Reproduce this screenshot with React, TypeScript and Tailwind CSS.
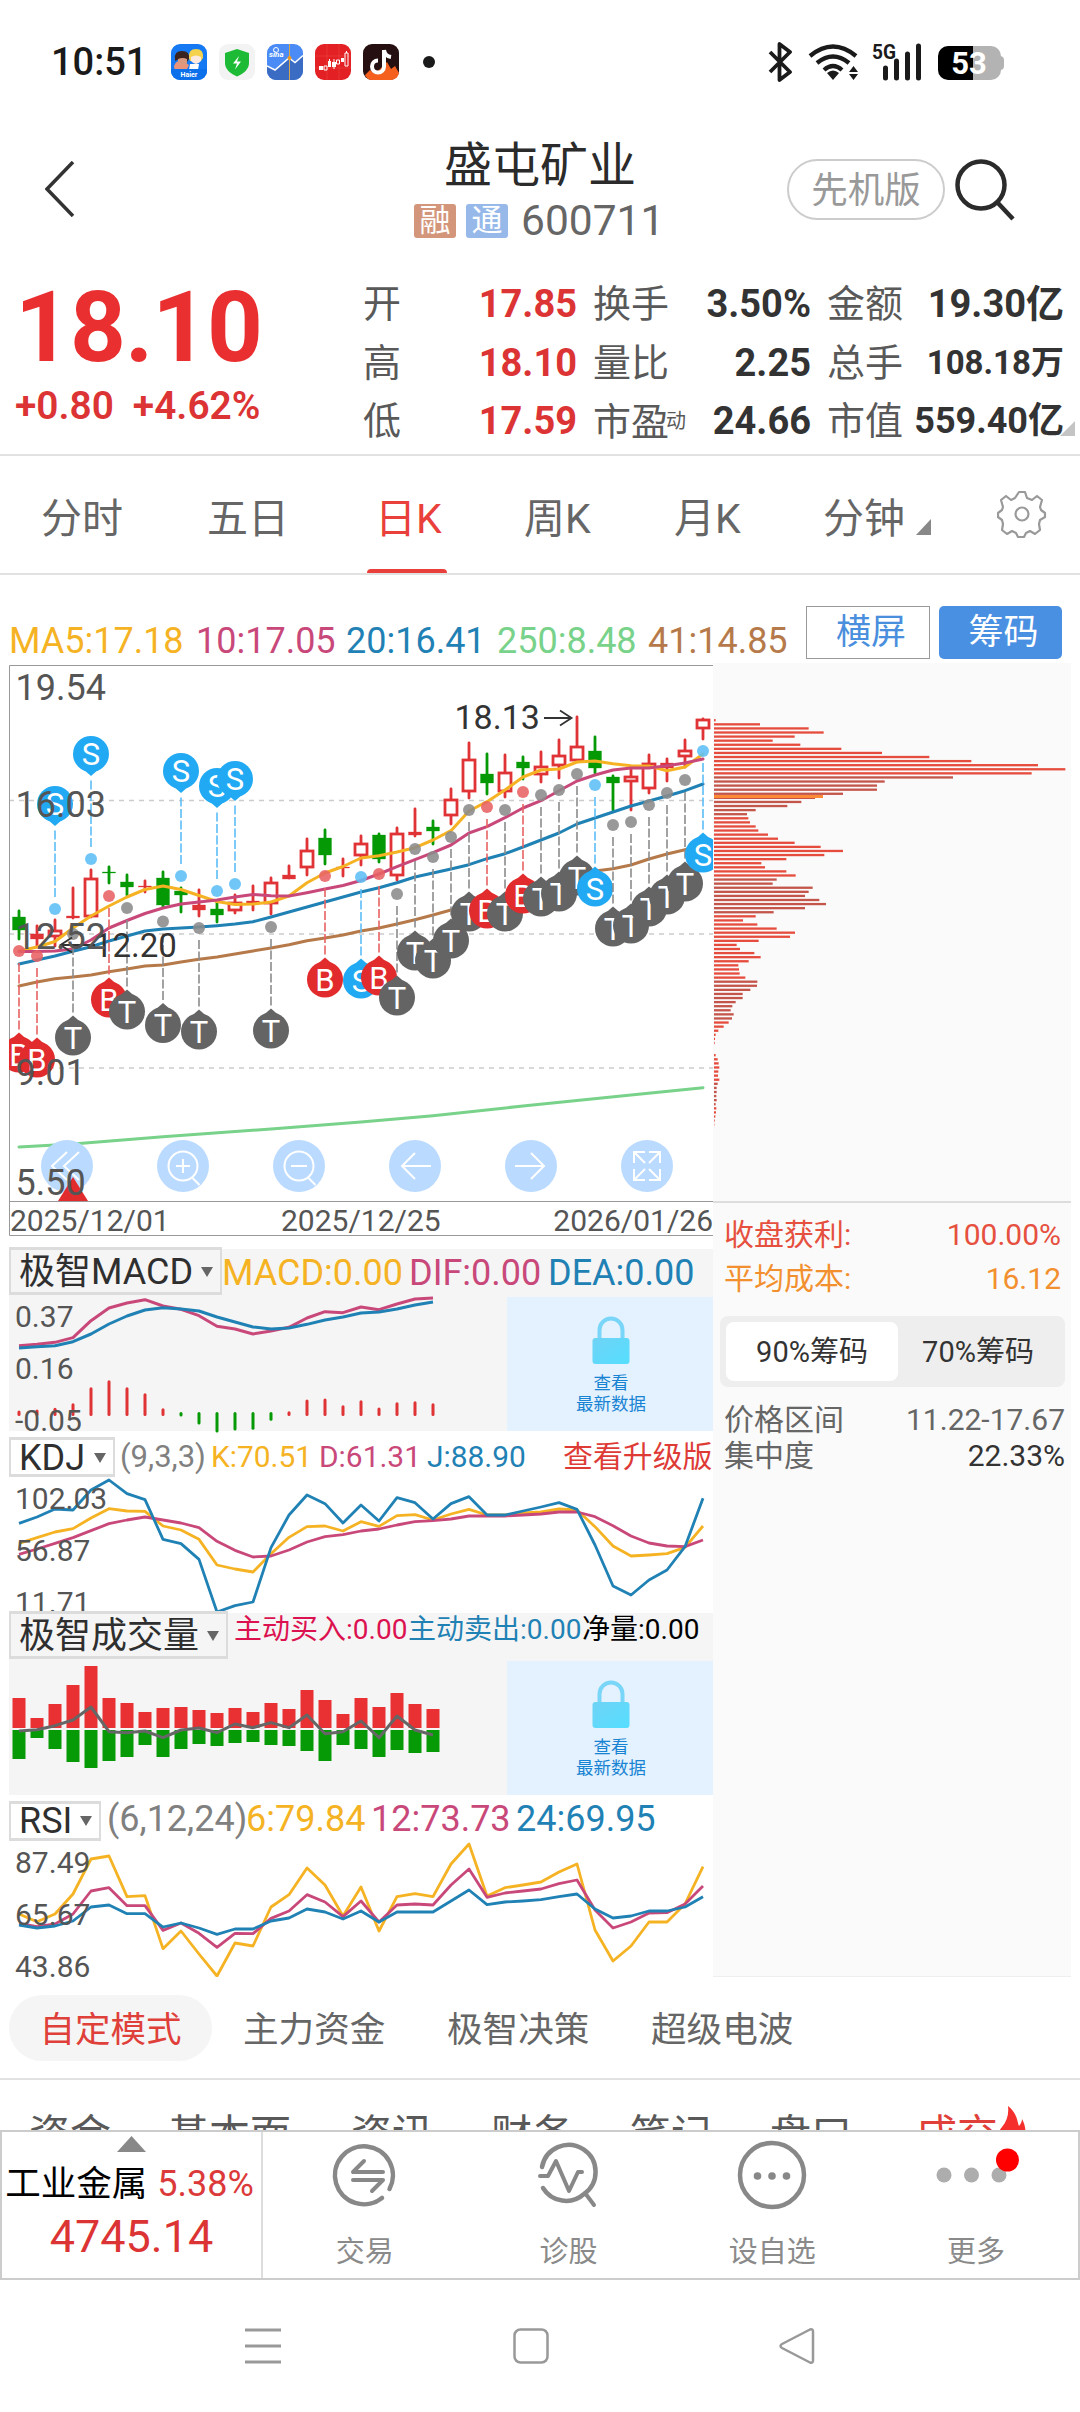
import React from 'react';

const STEP = 18;
const X0 = 19;
const cx = (i: number) => X0 + STEP * i;
const toPoints = (ys: number[]) => ys.map((y, i) => `${cx(i)},${y}`).join(' ');
// the sub charts are sampled at three units per pixel below their own origin
const scaled = (ys: number[], origin: number) => toPoints(ys.map(v => origin + v / 3));

const YELLOW = '#f5b324';
const PINK = '#c9487a';
const BLUE = '#1f81b4';
const UP = '#e03336';
const DOWN = '#069906';

// [kind, high, low, bodyTop, bodyBottom] - g: falling, r: rising (hollow), f: rising (filled), x/y: doji
type Candle = [string, number, number, number, number];
const candles: Candle[] = [
    ['g', 911, 939, 917, 930], ['f', 926, 947, 934, 939], ['r', 920, 946, 931, 936], ['x', 888, 918, 916, 918],
    ['r', 870, 917, 879, 916], ['y', 867, 883, 872, 873], ['g', 875, 895, 882, 887], ['x', 881, 892, 886, 887],
    ['g', 872, 907, 878, 905], ['g', 888, 912, 891, 895], ['f', 890, 916, 905, 910], ['g', 902, 922, 909, 915],
    ['r', 895, 913, 903, 910], ['f', 886, 910, 901, 903], ['r', 878, 914, 883, 903], ['f', 866, 878, 875, 879],
    ['r', 839, 875, 851, 867], ['g', 830, 864, 838, 855], ['x', 859, 876, 867, 868], ['r', 836, 865, 844, 855],
    ['g', 834, 862, 835, 859], ['r', 828, 880, 834, 875], ['f', 809, 836, 832, 835], ['g', 821, 844, 827, 831],
    ['r', 789, 824, 800, 815], ['r', 743, 798, 760, 791], ['g', 754, 794, 774, 783], ['r', 755, 797, 773, 791],
    ['g', 757, 779, 762, 768], ['r', 752, 782, 767, 774], ['r', 740, 778, 756, 765], ['r', 717, 761, 747, 760],
    ['g', 737, 773, 751, 768], ['g', 776, 810, 777, 783], ['r', 768, 810, 777, 781], ['r', 755, 793, 764, 788],
    ['f', 759, 781, 763, 768], ['r', 740, 767, 751, 756], ['r', 719, 739, 720, 728],
];

// [candle index, letter, dot y]
type Signal = [number, string, number];
const signalsAbove: Signal[] = [[2, 'S', 909], [4, 'S', 859], [9, 'S', 876], [11, 'S', 891], [12, 'S', 884]];
const signalsBelow: Signal[] = [
    [0, 'B', 951], [1, 'B', 956], [3, 'T', 934], [5, 'B', 896], [6, 'T', 908], [8, 'T', 921.5], [10, 'T', 928],
    [14, 'T', 927], [17, 'B', 876], [19, 'S', 877], [20, 'B', 874], [21, 'T', 894], [22, 'T', 849], [23, 'T', 857],
    [24, 'T', 837], [25, 'T', 810], [26, 'B', 807], [27, 'T', 810], [28, 'B', 792], [29, 'T', 795], [30, 'T', 790],
    [31, 'T', 774], [32, 'S', 785], [33, 'T', 825], [34, 'T', 822], [35, 'T', 805], [36, 'T', 793], [37, 'T', 780],
    [38, 'S', 751],
];
const pinColor: Record<string, string> = { S: '#22a9f3', B: '#e12b2d', T: '#646464' };
const dotColor: Record<string, string> = { S: '#5cbef6', B: '#e86263', T: '#8b8b8b' };

const ma5 = [951, 947, 941.5, 928, 916, 906, 897, 889.5, 886, 889.5, 895.5, 901.5, 904.5, 904, 902, 896, 882.7, 873, 866.5, 858, 855.7, 852, 847.7, 840, 830.7, 811, 801.7, 790, 777, 770, 769, 762, 761, 763.7, 765.7, 766, 770.7, 767, 754];
const ma10 = [951.5, 951.5, 951, 949, 940, 928, 920.5, 913.5, 908, 904, 902, 900, 897, 894.5, 895.7, 896, 892.7, 889, 885.5, 880.5, 874, 866.7, 859.7, 852.7, 845, 833, 826.7, 817.7, 808, 800.7, 790.7, 781, 775, 770, 768, 768, 765.7, 763, 759];
const ma20 = [964, 960, 956, 951.3, 946.7, 941, 936, 931, 929, 928, 927, 925.7, 924, 921.7, 917, 912, 907, 902, 897, 892, 887.7, 882.7, 877, 873, 869, 864.7, 858.7, 853.7, 847, 840, 833, 824, 818, 812, 806, 801, 796, 790.7, 784];
const ma41 = [986, 982, 978.7, 977, 975, 971.7, 969, 966, 965, 962, 959.3, 957, 954, 951, 948, 944.7, 940.7, 938, 935, 931, 928, 924, 919.7, 915, 910, 906, 902, 897, 891, 886, 881, 876, 871, 868.7, 865, 859, 854, 849.7, 845];

const difLine = [347, 343, 337, 323, 272, 234, 219, 209, 228, 238, 257, 289, 297, 312, 303, 292, 264, 245, 248, 231, 239, 222, 207, 204];
const deaLine = [354, 350, 347, 335, 312, 282, 258, 240, 233, 237, 243, 261, 276, 291, 297, 294, 283, 270, 261, 249, 246, 237, 225, 216];
const macdBars = [543, 540, 535, 521, 473, 452, 473, 491, 536, -558, -582, -606, -600, -598, -571, 545, 510, 507, 527, 512, 534, 518, 515, 521];

const jLine = [880, 861, 837, 840, 780, 750, 791, 809, 928, 941, 988, 1146, 1127, 1116, 953, 855, 795, 821, 879, 825, 873, 803, 818, 867, 821, 800, 855, 855, 843, 831, 818, 838, 945, 1068, 1095, 1050, 1020, 950, 805];
const kLine = [940, 923, 906, 896, 864, 836, 843, 844, 888, 900, 928, 1005, 1017, 1026, 971, 922, 890, 888, 903, 875, 889, 857, 854, 870, 852, 838, 855, 855, 849, 846, 837, 840, 890, 948, 978, 975, 971, 952, 888];
const dLine = [973, 957, 940, 923, 902, 881, 870, 861, 870, 879, 893, 934, 961, 981, 978, 960, 936, 920, 914, 903, 897, 885, 875, 872, 867, 858, 858, 858, 855, 852, 846, 846, 860, 887, 918, 939, 948, 950, 930];

const buyBars = [294, 354, 312, 255, 198, 294, 309, 336, 324, 321, 330, 339, 324, 336, 309, 327, 270, 300, 342, 294, 321, 279, 312, 327];
const sellBars = [477, 414, 447, 486, 504, 483, 471, 435, 471, 447, 432, 438, 429, 426, 435, 438, 453, 483, 435, 447, 471, 450, 459, 456];
const netLine = [393, 389, 377, 360, 321, 395, 398, 393, 413, 390, 384, 398, 372, 383, 368, 383, 345, 401, 395, 363, 413, 348, 390, 405];

const rsi6 = [942, 965, 942, 882, 777, 768, 890, 887, 1046, 993, 1062, 1128, 1029, 1038, 921, 884, 804, 855, 948, 861, 993, 890, 881, 890, 792, 732, 888, 863, 855, 846, 816, 792, 990, 1083, 1038, 966, 966, 912, 800];
const rsi12 = [970, 980, 972, 942, 873, 863, 917, 917, 991, 969, 1000, 1042, 1000, 1001, 955, 933, 884, 906, 950, 903, 966, 915, 912, 915, 855, 807, 892, 879, 873, 867, 851, 840, 930, 984, 966, 939, 938, 912, 858];
const rsi24 = [975, 984, 978, 963, 921, 915, 941, 941, 981, 969, 984, 1003, 987, 987, 963, 954, 927, 936, 957, 933, 966, 936, 936, 936, 903, 870, 914, 906, 903, 899, 890, 882, 927, 954, 948, 933, 933, 921, 890];

const chips = [5, 138, 284, 329, 242, 176, 259, 382, 504, 646, 772, 972, 1054, 953, 717, 512, 489, 489, 387, 303, 262, 220, 125, 99, 103, 108, 125, 133, 162, 192, 242, 320, 387, 331, 217, 142, 153, 217, 245, 188, 176, 296, 284, 273, 316, 336, 273, 179, 125, 87, 130, 188, 243, 228, 134, 68, 78, 121, 140, 104, 73, 75, 77, 94, 130, 129, 109, 86, 86, 65, 55, 50, 59, 54, 44, 29, 13, 5, 3, 2, 0, 0, 5, 11, 14, 16, 13, 12, 16, 11, 8, 8, 7, 8, 5, 7, 6, 4, 2, 1];
const isDarkChip = (k: number) => (k >= 14 && k <= 23) || (k >= 39 && k <= 47) || (k >= 64 && k <= 73) || (k >= 89 && k <= 94);

const quotes = [
    { w: 'w-[214px]', rows: [['开', '17.85', 'text-[38px] text-[#dc3434]'], ['高', '18.10', 'text-[38px] text-[#dc3434]'], ['低', '17.59', 'text-[38px] text-[#dc3434]']] },
    { w: 'w-[218px]', rows: [['换手', '3.50%', 'text-[38px] text-[#333]'], ['量比', '2.25', 'text-[38px] text-[#333]'], ['市盈', '24.66', 'text-[38px] text-[#333]']] },
    { w: 'w-[237px]', rows: [['金额', '19.30亿', 'text-[38px] text-[#333]'], ['总手', '108.18万', 'text-[33px] text-[#333]'], ['市值', '559.40亿', 'text-[36px] text-[#333]']] },
];

const periods = [
    { label: '分时', w: 'w-[166px]' }, { label: '五日', w: 'w-[168px]' }, { label: '日K', w: 'w-[149px]', active: true },
    { label: '周K', w: 'w-[150px]' }, { label: '月K', w: 'w-[149px]' }, { label: '分钟', w: 'w-[93px]' },
];

const StatusBar = () => (
    <div className="flex h-[124px] items-center pl-[51px]">
        <span className="w-[120px] text-[38px] leading-none font-medium text-[#1a1a1a]">10:51</span>
        <div className="flex gap-3">
            <svg className="size-9" viewBox="0 0 36 36">
                <rect width="36" height="36" rx="9" fill="#1479f2" />
                <path d="M3 22q2-6 9-5l6 4-3 6H4z" fill="#e9937a" />
                <path d="M4 15q-1-8 7-8 8 0 7 8l-2 3q-6-5-12-1z" fill="#3b2320" />
                <path d="M7 15q5-2 9 0v4q-4 5-9 0z" fill="#d99a80" />
                <path d="M18 14q-1-9 7-9 8 0 7 9l-2 3H19z" fill="#f5d24c" />
                <path d="M20 13q5-3 10 0v4q-5 6-10 0z" fill="#fbe9e0" />
                <path d="M19 20h9l-1 6h-9z" fill="#fff" />
                <path d="M0 25h36v2a9 9 0 0 1-9 9H9a9 9 0 0 1-9-9z" fill="#0b70ea" />
                <text x="18" y="33" textAnchor="middle" fontSize="7" fontWeight="700" fill="#fff">Haier</text>
            </svg>
            <svg className="size-9" viewBox="0 0 36 36">
                <rect width="36" height="36" rx="9" fill="#f3f3f3" />
                <path d="M18 5l12 4v10c0 6-5 10.500-12 13.500C11 29.500 6 25 6 19V9z" fill="#1dbb35" />
                <path d="M20 12l-6 7.500h4l-2 6 6-8h-4z" fill="#fff" />
            </svg>
            <svg className="size-9" viewBox="0 0 36 36">
                <rect width="36" height="36" rx="9" fill="#4b8bf5" />
                <path d="M0 22l8 4 14-12 5 4 9-7v16a9 9 0 0 1-9 9H9a9 9 0 0 1-9-9z" fill="#3a6cc4" />
                <path d="M0 22l8 4 14-12 6 4.500 8-7" fill="none" stroke="#fff" strokeWidth="1.500" />
                <path d="M22.500 0v36" stroke="#d5a64b" />
                <circle cx="22.500" cy="14" r="2" fill="#f39a1e" />
                <circle cx="9" cy="6" r="2.500" fill="none" stroke="#fff" />
                <text x="2" y="13" fontSize="8" fontStyle="italic" fontWeight="700" fill="#fff">sina</text>
            </svg>
            <svg className="size-9" viewBox="0 0 36 36">
                <rect width="36" height="36" rx="9" fill="#e32124" />
                <path d="M12 0v36M24 0v36M0 12h36M0 24h36" stroke="#e83c3e" strokeWidth="0.700" />
                <path d="M4 22h4v4H4zM13 17h3v6h-3zM17 18h4v5h-4zM26 14h3v4h-3z" fill="#fff" />
                <path d="M9 22h3v4H9zM21.500 16h3v4h-3zM30 9h3v13h-3zM14.500 15v2M19 15v10M31.500 7v2" fill="none" stroke="#fff" />
            </svg>
            <svg className="size-9" viewBox="0 0 36 36">
                <rect width="36" height="36" rx="9" fill="#260f10" />
                <path d="M2 31l5-5 5 4 12-12 4 7 4-3 4 7a9 9 0 0 1-8 7H9q-5 0-7-5z" fill="#f5601f" />
                <path d="M21 6v16.500a6 6 0 1 1-6-6" fill="none" stroke="#fff" strokeWidth="4" />
                <path d="M21 6q1 6 7 7" fill="none" stroke="#fff" strokeWidth="4" />
            </svg>
        </div>
        <span className="ml-6 size-3 rounded-full bg-[#1a1a1a]" />
        <svg className="ml-[332px] h-10 w-[240px]" viewBox="767 42 240 40" fill="none">
            <path d="M770 52l20 20-10.500 8V44L790 52 770 72" stroke="#1a1a1a" strokeWidth="3.800" strokeLinejoin="round" />
            <path d="M810 56q23-19 46 0M817 63q16-13 32 0M824 70q9-8 18 0" stroke="#1a1a1a" strokeWidth="4.300" />
            <path d="M827 73q6-5 12 0l-6 7z" fill="#1a1a1a" />
            <path d="M849 72l4.500-6 4.500 6zM849 74l4.500 6 4.500-6z" fill="#1a1a1a" />
            <text x="872" y="59" fontSize="20" fontWeight="700" textLength="24" lengthAdjust="spacingAndGlyphs" fill="#1a1a1a">5G</text>
            <path d="M885.500 68v10M896.500 61v17M907.500 54v24M918.500 46v32" stroke="#1a1a1a" strokeWidth="5" strokeLinecap="round" />
            <path d="M973 46h18a10 10 0 0 1 10 10v14a10 10 0 0 1-10 10h-18z" fill="#b3b3b3" />
            <path d="M1001 56q3 1 3 4v6q0 3-3 4z" fill="#b3b3b3" />
            <path d="M973 46h-25a10 10 0 0 0-10 10v14a10 10 0 0 0 10 10h25z" fill="#000" />
            <text x="969" y="74" textAnchor="middle" fontSize="31" fontWeight="700" fill="#fff">53</text>
        </svg>
    </div>
);

const Header = () => (
    <div className="flex h-[131px]">
        <div className="flex w-[414px] items-center pb-0.5 pl-[45px]">
            <svg className="h-[56px] w-[30px]" viewBox="0 0 30 56" fill="none" stroke="#333" strokeWidth="3.500">
                <path d="M28 1L2 28l26 27" />
            </svg>
        </div>
        <div className="flex w-[252px] flex-col items-center pt-[18px]">
            <h1 className="text-[48px] leading-[48px] text-[#2b2b2b]">盛屯矿业</h1>
            <div className="mt-[14px] flex h-[34px] w-full items-center text-[31px] leading-[34px] whitespace-nowrap text-white">
                <span className="w-[42px] rounded-[3px] bg-[#d3967b] text-center">融</span>
                <span className="ml-[10px] w-[42px] rounded-[3px] bg-[#96b9ea] text-center">通</span>
                <span className="ml-[13px] text-[42.500px] text-[#666]">600711</span>
            </div>
        </div>
        <div className="flex flex-1 items-center pl-[121px]">
            <span className="h-[61px] w-[158px] rounded-full border-2 border-[#ccc] pt-px text-center text-[36.500px] leading-[58px] text-[#999]">先机版</span>
            <svg className="ml-[8px] h-[62px] w-[62px]" viewBox="952 159 62 62" fill="none" stroke="#2b2b2b" strokeWidth="4.500">
                <circle cx="980" cy="185" r="23.500" />
                <path d="M996 202l16 17" />
            </svg>
        </div>
    </div>
);

const QuotePanel = () => (
    <div className="flex h-[201px] border-b-2 border-[#e2e2e2]">
        <div className="w-[363px] pt-[25px] pl-[15px] text-[#e92f30]">
            <p className="text-[97.500px] leading-[96px] font-bold tracking-[-1px]">18.10</p>
            <p className="mt-[10px] flex gap-[19px] text-[38.800px] leading-10 font-semibold text-[#dc3434]">
                <span>+0.80</span>
                <span>+4.62%</span>
            </p>
        </div>
        <div className="relative flex gap-4 pt-[20px]">
            {quotes.map(group => (
                <div key={group.w} className={group.w}>
                    {group.rows.map(([label, value, style]) => (
                        <div key={label} className="flex h-[58.500px] items-center justify-between leading-[58px] whitespace-nowrap">
                            <span className="text-[38px] text-[#595959]">
                                {label}
                                {label === '市盈' && <span className="-ml-[3px] align-[7px] text-[20px]">动</span>}
                            </span>
                            <span className={`font-bold ${style}`}>{value}</span>
                        </div>
                    ))}
                </div>
            ))}
            <svg className="absolute top-[166px] left-[697px] size-4" viewBox="0 0 16 16"><path d="M15 0v15H0z" fill="#c4c4c4" /></svg>
        </div>
    </div>
);

const PeriodTabs = () => (
    <div className="flex h-[119px] items-center border-b-2 border-[#e2e2e2] pt-1 pl-[41px] text-[41px] leading-[112px] text-[#666]">
        {periods.map(p => (
            <div key={p.label} className={`${p.w} relative shrink-0 pt-1 ${p.active ? 'text-[#ea403c]' : ''}`}>
                {p.label}
                {p.active && <span className="absolute bottom-0.5 left-[-8px] h-1 w-20 rounded-t-sm bg-[#ea403c]" />}
            </div>
        ))}
        <svg className="mt-5 size-4" viewBox="0 0 16 16"><path d="M15 0v16H0z" fill="#888" /></svg>
        <svg className="mb-1.5 ml-[65px] size-[50px]" viewBox="0 0 50 50" fill="none" stroke="#999" strokeWidth="2.200" strokeLinejoin="round">
            <path d="M22 3h6l2 6 5 2 5-4 5 4-2 7 1 3 4 3v4l-5 3-1 4 1 6-5 4-5-3-4 2-2 4h-6l-2-4-4-2-5 3-5-4 1-6-1-4-4-3v-4l4-3 1-3-2-7 5-4 5 4 4-2z" />
            <circle cx="25" cy="25" r="6.500" />
        </svg>
    </div>
);

const Toolbar = () => (
    <div className="flex h-[88px] items-end pb-1 pl-[9px] text-[36px] leading-9">
        <span className="w-[187px] text-[#f5b324]">MA5:17.18</span>
        <span className="w-[150px] text-[#c9487a]">10:17.05</span>
        <span className="w-[151px] text-[#1f81b4]">20:16.41</span>
        <span className="w-[151px] text-[#78d28a]">250:8.48</span>
        <span className="w-[158px] text-[#b67a4a]">41:14.85</span>
        <button className="h-[53px] w-[124px] border border-[#999] pt-px pl-1.5 text-[35px] text-[#4a8fdd]">横屏</button>
        <button className="ml-[9px] h-[53px] w-[123px] rounded-[5px] bg-[#4a90e2] pt-px pl-1.5 text-[35px] text-white">筹码</button>
    </div>
);

const Candlestick = ({ i, c }: { i: number; c: Candle }) => {
    const [kind, high, low, top, bottom] = c;
    const x = cx(i);
    const color = kind === 'g' || kind === 'y' ? DOWN : UP;
    if (kind === 'r') {
        return (
            <g stroke={color} strokeWidth="2.800">
                <path d={`M${x} ${high}V${top}M${x} ${bottom}V${low}`} strokeLinecap="round" />
                <rect x={x - 6} y={top} width="12" height={bottom - top} fill="#fff" />
            </g>
        );
    }
    return (
        <g stroke={color} fill={color}>
            <path d={`M${x} ${high}V${low}`} strokeWidth="2.800" strokeLinecap="round" />
            <rect x={x - 6.5} y={top} width="13" height={bottom - top} strokeWidth="0.300" />
        </g>
    );
};

const Pin = ({ s, above }: { s: Signal; above?: boolean }) => {
    const [i, letter, dot] = s;
    const x = cx(i);
    const dir = above ? -1 : 1;
    const y = above ? dot - 105 : dot + 103.5;
    return (
        <g>
            <path d={`M${x} ${dot + dir * 12}V${y - dir * 24}`} stroke={dotColor[letter]} strokeWidth="2" strokeDasharray="9 2.500" opacity="0.800" />
            <circle cx={x} cy={dot} r="6" fill={dotColor[letter]} opacity="0.880" />
            <path d={`M${x} ${y - dir * 22}l8 ${dir * 7}h-16z`} fill={pinColor[letter]} />
            <circle cx={x} cy={y} r="18" fill={pinColor[letter]} />
            <text x={x} y={y + 11} textAnchor="middle" fontSize="31" fill="#fff">{letter}</text>
        </g>
    );
};

const MainChart = () => (
    <svg className="block h-[574px] w-[704px]" viewBox="9 663 704 574">
        <path d="M9 800.500H713M9 934H713M9 1068H713" stroke="#ccc" strokeWidth="1.500" strokeDasharray="5 5" />
        <path d="M713 665.500H9.500V1235.500H713M9 1201.500H713" fill="none" stroke="#999" />
        {candles.map((c, i) => <Candlestick key={i} i={i} c={c} />)}
        <g fill="none" strokeWidth="3" strokeLinejoin="round" strokeLinecap="round">
            <path d="M19 1147L73 1144L163 1136.700L271 1129L361 1122L433 1115.700L523 1106L631 1095L703 1087.700" stroke="#78d28a" />
            <polyline points={toPoints(ma5)} stroke={YELLOW} />
            <polyline points={toPoints(ma10)} stroke={PINK} />
            <polyline points={toPoints(ma20)} stroke={BLUE} />
            <polyline points={toPoints(ma41)} stroke="#b67a4a" />
        </g>
        {signalsAbove.map(s => <Pin key={s[0]} s={s} above />)}
        {signalsBelow.map(s => <Pin key={s[0]} s={s} />)}
        <g fill="none" stroke="#333" strokeWidth="1.800">
            <path d="M544 718H571M560 710.500L571.500 718L560 725.500" />
            <path d="M95 945H61M72 937.500L60.500 945L72 952.500" />
        </g>
        <text x="454.500" y="729" fontSize="34" fill="#333">18.13</text>
        <text x="94" y="957" fontSize="33" fill="#333">12.20</text>
        <g fill="none" stroke="#fff" strokeWidth="2">
            {[67, 183, 299, 415, 531, 647].map(x => <circle key={x} cx={x} cy="1166" r="26" fill="#badaff" stroke="none" />)}
            <path d="M67 1152L52 1166L67 1180M79 1152L64 1166L79 1180" />
            <circle cx="183" cy="1166" r="14.500" />
            <path d="M176 1166h14M183 1159v14M192.500 1178l7 7" />
            <circle cx="299" cy="1166" r="14.500" />
            <path d="M291 1166h16M308.500 1178l7 7" />
            <path d="M431 1166H402M415 1153L402 1166L415 1179" />
            <path d="M515 1166H544M531 1153L544 1166L531 1179" />
            <path d="M634 1163v-11h11M634 1152l11 11M660 1163v-11h-11M660 1152l-11 11M634 1169v11h11M634 1180l11-11M660 1169v11h-11M660 1180l-11-11" />
        </g>
        <path d="M73 1177L88 1201H58z" fill="#e12b2d" />
        <g fontSize="36" fill="#555">
            <text x="15.500" y="700">19.54</text>
            <text x="15.500" y="817">16.03</text>
            <text x="15.500" y="949">12.52</text>
            <text x="15.500" y="1085">9.01</text>
            <text x="15.500" y="1195">5.50</text>
        </g>
        <g fontSize="30" fill="#555">
            <text x="10" y="1231">2025/12/01</text>
            <text x="281" y="1231">2025/12/25</text>
            <text x="713" y="1231" textAnchor="end">2026/01/26</text>
        </g>
    </svg>
);

const IndicatorSelect = ({ label, className }: { label: string; className: string }) => (
    <button className={`flex shrink-0 items-center justify-between border-t-[3px] border-r-2 border-b-[3px] border-l-2 border-[#dcdcdc] pt-0.5 pr-[7px] pl-2 text-[36px] leading-none whitespace-nowrap text-[#2f2f2f] ${className}`}>
        {label}
        <svg className="h-[10px] w-3" viewBox="0 0 12 10"><path d="M0 0h12L6 10z" fill="#666" /></svg>
    </button>
);

const AxisLabels = ({ items }: { items: [string, number][] }) => (
    <g fontSize="30" fill="#555">
        {items.map(([label, y]) => <text key={label} x="15" y={y}>{label}</text>)}
    </g>
);

const LockedData = ({ id }: { id: string }) => (
    <div className="flex h-[134px] w-[206px] flex-col items-center bg-[#e3f2fe] pt-[19px] pl-0.5 text-[17.500px] leading-[20.500px] text-[#1883d3]">
        <svg className="mb-[9px] h-12 w-[38px]" viewBox="0 0 38 48">
            <defs>
                <linearGradient id={id} x1="0" y1="0" x2="1" y2="1">
                    <stop offset="0" stopColor="#6fd3f5" />
                    <stop offset="1" stopColor="#55deff" />
                </linearGradient>
            </defs>
            <path d="M7.500 24V14a11.500 11.500 0 0 1 23 0v10" fill="none" stroke="#7ad6f8" strokeWidth="4" />
            <rect x="0.500" y="22" width="37" height="26" rx="3" fill={`url(#${id})`} />
        </svg>
        <span>查看</span>
        <span>最新数据</span>
    </div>
);

const MacdPanel = () => (
    <div className="mt-3 h-[182px] bg-[#f5f5f5]">
        <div className="flex h-12 text-[36px] leading-[48px] whitespace-nowrap">
            <IndicatorSelect label="极智MACD" className="-mt-0.5 h-[48px] w-[213px] bg-[#f5f5f5]" />
            <span className="w-[187px] text-[#f5b324]">MACD:0.00</span>
            <span className="w-[139px] text-[#c9487a]">DIF:0.00</span>
            <span className="text-[#1f81b4]">DEA:0.00</span>
        </div>
        <div className="flex">
            <svg className="block h-[134px] w-[498px] overflow-visible" viewBox="9 1297 498 134">
                {macdBars.map((v, i) => (
                    <path
                        key={i}
                        d={v > 0 ? `M${cx(i)} ${1231 + v / 3}V1414.500` : `M${cx(i)} 1413.500V${1229 - v / 3}`}
                        stroke={v > 0 ? UP : DOWN}
                        strokeWidth="3"
                        strokeLinecap="round"
                    />
                ))}
                <g fill="none" strokeWidth="3" strokeLinejoin="round">
                    <polyline points={scaled(difLine, 1230)} stroke={PINK} />
                    <polyline points={scaled(deaLine, 1230)} stroke={BLUE} />
                </g>
                <AxisLabels items={[['0.37', 1327], ['0.16', 1379], ['-0.05', 1430.5]]} />
            </svg>
            <LockedData id="lock-macd" />
        </div>
    </div>
);

const KdjPanel = () => (
    <div className="mt-1.5">
        <div className="flex h-10 text-[29.900px] leading-[40px] whitespace-nowrap">
            <IndicatorSelect label="KDJ" className="h-10 w-[106px]" />
            <span className="w-[96px] pl-[5px] text-[31px] text-[#808080]">(9,3,3)</span>
            <span className="w-[108px] text-[#f5b324]">K:70.51</span>
            <span className="w-[108px] text-[#c9487a]">D:61.31</span>
            <span className="w-[136px] text-[#1f81b4]">J:88.90</span>
            <span className="text-[#de3b37]">查看升级版</span>
        </div>
        <svg className="block h-[136px] w-[704px]" viewBox="9 1477 704 136">
            <g fill="none" strokeWidth="2.800" strokeLinejoin="round">
                <polyline points={scaled(kLine, 1230)} stroke={YELLOW} />
                <polyline points={scaled(dLine, 1230)} stroke={PINK} />
                <polyline points={scaled(jLine, 1230)} stroke={BLUE} />
            </g>
            <AxisLabels items={[['102.03', 1509], ['56.87', 1561], ['11.71', 1613]]} />
        </svg>
    </div>
);

const VolumePanel = () => (
    <div className="h-[182px] bg-[#f5f5f5]">
        <div className="flex h-12 text-[28px] leading-[33px] whitespace-nowrap">
            <IndicatorSelect label="极智成交量" className="relative -mt-0.5 h-[48px] w-[219px] bg-[#f5f5f5]" />
            <span className="w-[180px] pl-[6px] text-[#dc1250]">主动买入:0.00</span>
            <span className="w-[174px] text-[#1f81b4]">主动卖出:0.00</span>
            <span className="text-black">净量:0.00</span>
        </div>
        <div className="flex">
            <svg className="block h-[134px] w-[498px]" viewBox="9 1661 498 134">
                {buyBars.map((v, i) => (
                    <g key={i}>
                        <rect x={cx(i) - 6.5} y={1600 + v / 3} width="13" height={128 - v / 3} fill="#e93032" />
                        <rect x={cx(i) - 6.5} y="1730" width="13" height={sellBars[i] / 3 - 130} fill="#069b06" />
                    </g>
                ))}
                <polyline points={scaled(netLine, 1600)} fill="none" stroke="#666" strokeWidth="3" strokeLinejoin="round" />
            </svg>
            <LockedData id="lock-volume" />
        </div>
    </div>
);

const RsiPanel = () => (
    <div className="mt-1.5">
        <div className="flex h-10 text-[36px] leading-[36px] whitespace-nowrap">
            <IndicatorSelect label="RSI" className="h-10 w-[92px] pb-0.5" />
            <span className="w-[145px] pl-[6px] text-[#808080]">(6,12,24)</span>
            <span className="w-[125px] text-[#f5b324]">6:79.84</span>
            <span className="w-[145px] text-[#c9487a]">12:73.73</span>
            <span className="text-[#1f81b4]">24:69.95</span>
        </div>
        <svg className="block h-[136px] w-[704px]" viewBox="9 1841 704 136">
            <g fill="none" strokeWidth="2.800" strokeLinejoin="round">
                <polyline points={scaled(rsi6, 1600)} stroke={YELLOW} />
                <polyline points={scaled(rsi12, 1600)} stroke={PINK} />
                <polyline points={scaled(rsi24, 1600)} stroke={BLUE} />
            </g>
            <AxisLabels items={[['87.49', 1873], ['65.67', 1925], ['43.86', 1976.5]]} />
        </svg>
    </div>
);

const ChipPanel = () => (
    <div className="w-[358px] border-b border-[#eee] bg-[#fafafa]">
        <svg className="block h-[538px] w-[358px]" viewBox="713 663 358 538">
            {chips.map((w, k) => w > 0 && (
                <rect key={k} x="714" y={719.1 + k * 4.085} width={w / 3} height="2.300" fill={isDarkChip(k) ? '#c4554a' : '#e64c3d'} />
            ))}
            <rect x="714" y="795" width="109" height="3" fill="#ff8a35" />
        </svg>
        <div className="border-t-2 border-[#ddd] pt-[10px]">
            <div className="flex justify-between pr-2.5 pl-[11px] text-[30px] leading-[44px]">
                <span className="text-[#e6503f]">收盘获利:</span>
                <span className="text-[#e6503f]">100.00%</span>
            </div>
            <div className="flex justify-between pr-2.5 pl-[11px] text-[30px] leading-[44px] text-[#f2902f]">
                <span>平均成本:</span>
                <span>16.12</span>
            </div>
            <div className="mt-[15px] ml-[7px] flex h-[71px] w-[345px] rounded-lg bg-[#eee] p-1.5 text-center text-[29px] leading-[61px] text-[#333]">
                <button className="w-[172px] rounded-lg bg-white">90%筹码</button>
                <button className="w-[160px]">70%筹码</button>
            </div>
            <div className="mt-[15px] flex justify-between pr-1.5 pl-[11px] text-[30px] leading-9 text-[#666]">
                <span>价格区间</span>
                <span>11.22-17.67</span>
            </div>
            <div className="flex justify-between pr-1.5 pl-[11px] text-[30px] leading-9 text-[#666]">
                <span>集中度</span>
                <span className="text-[#333]">22.33%</span>
            </div>
        </div>
    </div>
);

const ModeTabs = () => (
    <div className="flex h-[103px] border-b-2 border-[#e2e2e2] pt-[18px] pl-[9px] text-[35.600px] leading-[70px] text-[#666]">
        <span className="h-[66px] w-[203px] rounded-full bg-[#f5f5f5] text-center text-[35.500px] text-[#e0403a]">自定模式</span>
        <span className="ml-[31px] w-[204px]">主力资金</span>
        <span className="w-[204px]">极智决策</span>
        <span>超级电波</span>
    </div>
);

const InfoTabs = () => (
    <div className="flex h-[50px] overflow-hidden pt-[30px] pl-[29px] text-[41px] leading-[50px] whitespace-nowrap text-[#595959]">
        <span className="w-[139px] shrink-0">资金</span>
        <span className="w-[183px] shrink-0">基本面</span>
        <span className="w-[140px] shrink-0">资讯</span>
        <span className="w-[139px] shrink-0">财务</span>
        <span className="w-[140px] shrink-0">笔记</span>
        <span className="w-[146px] shrink-0">盘口</span>
        <span className="w-[81px] shrink-0 text-[#e0403a]">成交</span>
        <svg className="-mt-1 h-11 w-8 shrink-0" viewBox="0 0 32 44">
            <path d="M11 0c10 8 9 16 11 20 2-2 3-5 3-7 6 10 5 28-9 30C2 43-3 30 5 21 10 15 12 8 11 0z" fill="#f5302c" />
        </svg>
    </div>
);

const actions = [
    {
        label: '交易',
        icon: (
            <g>
                <path d="M386.500 2191A29 29 0 1 0 379 2200" transform="translate(0 -2)" />
                <path d="M350 2172h30M350 2172l11-11M380 2180h-30M380 2180l-11 11" strokeWidth="4" />
            </g>
        ),
        box: '327 2135 70 80',
    },
    {
        label: '诊股',
        icon: (
            <g>
                <path d="M543 2165A27 27 0 1 1 585 2192A27 27 0 0 1 544 2186" />
                <path d="M541 2174h8l8-15 13 30 9-19h4M586 2191l9 12" strokeWidth="4" strokeLinejoin="round" />
            </g>
        ),
        box: '535 2133 70 80',
    },
    {
        label: '设自选',
        icon: (
            <g>
                <circle cx="773" cy="2175" r="32" />
                <g fill="#888" stroke="none"><circle cx="758.500" cy="2176" r="3.800" /><circle cx="773" cy="2176" r="3.800" /><circle cx="787.500" cy="2176" r="3.800" /></g>
            </g>
        ),
        box: '738 2135 70 80',
    },
    {
        label: '更多',
        icon: (
            <g fill="#adadad" stroke="none">
                <circle cx="944" cy="2175" r="7.500" /><circle cx="971.500" cy="2175" r="7.500" /><circle cx="999" cy="2175" r="7.500" />
                <circle cx="1007.500" cy="2160" r="11.500" fill="#fe0000" />
            </g>
        ),
        box: '931 2135 90 80',
    },
];

const BottomBar = () => (
    <div className="flex h-[150px] border-2 border-[#ccc] bg-white">
        <div className="flex w-[261px] flex-col items-center border-r-2 border-[#ddd] pt-1">
            <svg className="h-4 w-[29px]" viewBox="0 0 29 16"><path d="M14.500 0L29 16H0z" fill="#888" /></svg>
            <p className="mt-[10px] flex gap-[10px] pr-[4px] leading-[44px] whitespace-nowrap">
                <span className="text-[35.500px] text-black">工业金属</span>
                <span className="text-[36px] text-[#dc3a3a]">5.38%</span>
            </p>
            <p className="mt-[5px] text-[45px] leading-[52px] text-[#dc3434]">4745.14</p>
        </div>
        {actions.map(a => (
            <div key={a.label} className="flex flex-1 flex-col items-center pt-[3px]">
                <svg className="h-20" viewBox={a.box} fill="none" stroke="#888" strokeWidth="4.500" strokeLinecap="round">{a.icon}</svg>
                <span className="mt-[19px] text-[29px] leading-9 text-[#8a8a8a]">{a.label}</span>
            </div>
        ))}
    </div>
);

const NavBar = () => (
    <div className="flex h-[132px] items-center pl-[245px]">
        <svg className="h-9 w-[36px]" viewBox="0 0 36 36" stroke="#999" strokeWidth="3"><path d="M0 2h36M0 18h36M0 34h36" /></svg>
        <svg className="ml-[232px] h-9 w-9" viewBox="0 0 36 36" fill="none" stroke="#999" strokeWidth="2.500"><rect x="1.500" y="1.500" width="33" height="33" rx="6" /></svg>
        <svg className="ml-[230px] h-9 w-9" viewBox="0 0 36 36" fill="none" stroke="#999" strokeWidth="2.500" strokeLinejoin="round"><path d="M31 1.500q3-1 3 2v29q0 3-3 2L3 20q-3-2 0-4z" /></svg>
    </div>
);

export default function App() {
    return (
        <div className="h-[2412px] w-[1080px] overflow-hidden bg-white font-['Roboto','Noto_Sans_CJK_SC',sans-serif]">
            <StatusBar />
            <Header />
            <QuotePanel />
            <PeriodTabs />
            <Toolbar />
            <div className="flex h-[1314px] pl-[9px]">
                <div className="w-[704px]">
                    <MainChart />
                    <MacdPanel />
                    <KdjPanel />
                    <VolumePanel />
                    <RsiPanel />
                </div>
                <ChipPanel />
            </div>
            <ModeTabs />
            <InfoTabs />
            <BottomBar />
            <NavBar />
        </div>
    );
}
